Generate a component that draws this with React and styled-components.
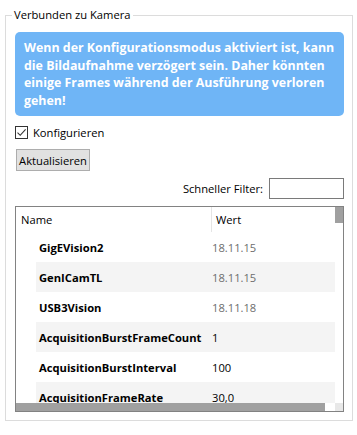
import React from 'react';
import styled, { createGlobalStyle } from 'styled-components';

const GlobalStyle = createGlobalStyle`
  html, body {
    margin: 0;
    padding: 0;
    background: #ffffff;
  }
  body {
    font-family: 'Open Sans', 'Noto Sans', sans-serif;
    font-size: 11.2px;
    color: #000000;
  }
`;

const rows = [
  { name: 'GigEVision2', value: '18.11.15', muted: true },
  { name: 'GenICamTL', value: '18.11.15', muted: true },
  { name: 'USB3Vision', value: '18.11.18', muted: true },
  { name: 'AcquisitionBurstFrameCount', value: '1' },
  { name: 'AcquisitionBurstInterval', value: '100' },
  { name: 'AcquisitionFrameRate', value: '30,0' },
];

const App = () => {
  return (
    <>
      <GlobalStyle />
      <Group>
        <Legend>Verbunden zu Kamera</Legend>
        <Notice>
          Wenn der Konfigurationsmodus aktiviert ist, kann
          <br />
          die Bildaufnahme verzögert sein. Daher könnten
          <br />
          einige Frames während der Ausführung verloren
          <br />
          gehen!
        </Notice>
        <CheckRow>
          <CheckBox>
            <svg width="11" height="11" viewBox="0 0 11 11">
              <path d="M1.5 5.6 L4.2 8.3 L9.6 2.3" fill="none" stroke="#333" strokeWidth="1.1" />
            </svg>
          </CheckBox>
          <span>Konfigurieren</span>
        </CheckRow>
        <Button>Aktualisieren</Button>
        <FilterRow>
          <span>Schneller Filter:</span>
          <FilterInput />
        </FilterRow>
        <Table>
          <Viewport>
            <Grid>
              <HeadRow>
                <HeadCell>Name</HeadCell>
                <HeadCell $divider>Wert</HeadCell>
              </HeadRow>
              {rows.map((r, i) => (
                <Row key={r.name} $alt={i % 2 === 1}>
                  <NameCell>{r.name}</NameCell>
                  <ValueCell $muted={r.muted}>{r.value}</ValueCell>
                </Row>
              ))}
            </Grid>
            <VScroll>
              <VThumb />
            </VScroll>
          </Viewport>
          <HScroll>
            <HThumb />
            <HGap />
            <Corner />
          </HScroll>
        </Table>
      </Group>
    </>
  );
};

const Group = styled.fieldset`
  margin: 7px 5px 0 5px;
  width: 348px;
  height: 414px;
  box-sizing: border-box;
  padding: 9px 8px 8px 9px;
  border: 1px solid #dcdcdc;
  display: flex;
  flex-direction: column;
`;

const Legend = styled.legend`
  margin-left: -3px;
  padding: 0 2px;
  line-height: 16px;
`;

const Notice = styled.div`
  background: #6fb5f6;
  color: #ffffff;
  border-radius: 5px;
  padding: 7px 4px 7px 9px;
  font-weight: 700;
  font-size: 12.4px;
  line-height: 17.5px;
  white-space: nowrap;
`;

const CheckRow = styled.label`
  display: flex;
  align-items: center;
  gap: 5px;
  margin-top: 10px;
  height: 13px;
`;

const CheckBox = styled.span`
  width: 13px;
  height: 13px;
  box-sizing: border-box;
  border: 1px solid #333333;
  background: #ffffff;
  display: flex;
  align-items: center;
  justify-content: center;
`;

const Button = styled.button`
  align-self: flex-start;
  margin-top: 10px;
  margin-left: 1px;
  width: 74px;
  height: 23px;
  padding: 0;
  background: #e1e1e1;
  border: 1px solid #adadad;
  border-radius: 0;
  font-family: inherit;
  font-size: 11.2px;
  color: #000000;
`;

const FilterRow = styled.div`
  display: flex;
  justify-content: flex-end;
  align-items: center;
  gap: 6px;
  margin-top: 7px;
`;

const FilterInput = styled.div`
  width: 75px;
  height: 21px;
  box-sizing: border-box;
  border: 1px solid #7a7a7a;
  background: #ffffff;
`;

const Table = styled.div`
  margin-top: 7px;
  height: 206px;
  box-sizing: border-box;
  border: 1px solid #828282;
  display: flex;
  flex-direction: column;
`;

const Viewport = styled.div`
  flex: 1;
  display: flex;
  overflow: hidden;
`;

const Grid = styled.div`
  flex: 1;
  display: flex;
  flex-direction: column;
`;

const HeadRow = styled.div`
  display: grid;
  grid-template-columns: 195px 1fr;
  height: 25px;
  flex: none;
`;

const HeadCell = styled.div`
  display: flex;
  align-items: center;
  padding-left: ${(p) => (p.$divider ? '4px' : '5px')};
  border-left: ${(p) => (p.$divider ? '1px solid #e5e5e5' : 'none')};
`;

const Row = styled.div`
  flex: none;
  display: grid;
  grid-template-columns: 175px 1fr;
  height: 30px;
  margin-left: 20px;
  align-items: center;
  background: ${(p) => (p.$alt ? '#f4f4f4' : 'transparent')};
`;

const NameCell = styled.div`
  padding-left: 3px;
  font-weight: 700;
  white-space: nowrap;
  overflow: hidden;
`;

const ValueCell = styled.div`
  padding-left: 1px;
  color: ${(p) => (p.$muted ? '#6d6d6d' : '#000000')};
`;

const VScroll = styled.div`
  width: 8px;
  flex: none;
  background: #ffffff;
`;

const VThumb = styled.div`
  height: 16px;
  background: #a0a0a0;
`;

const HScroll = styled.div`
  flex: none;
  height: 8px;
  display: flex;
`;

const HThumb = styled.div`
  width: 309px;
  background: #a0a0a0;
`;

const HGap = styled.div`
  flex: 1;
  background: #ffffff;
`;

const Corner = styled.div`
  width: 8px;
  background: #e8e8e8;
`;

export default App;
